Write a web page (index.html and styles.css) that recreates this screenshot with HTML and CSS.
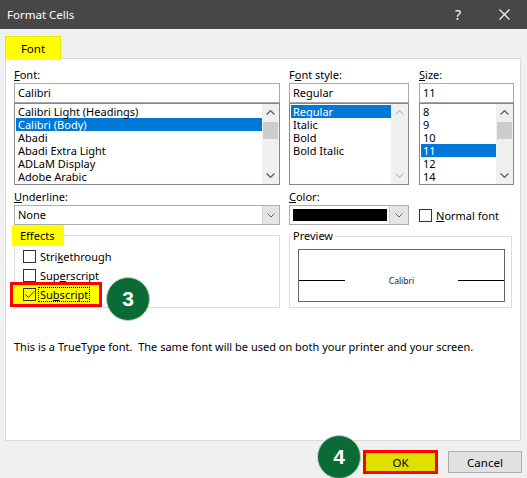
FILE: index.html
```html
<!DOCTYPE html>
<html lang="en">
<head>
    <meta charset="UTF-8">
    <title>Format Cells</title>
    <link rel="stylesheet" href="styles.css">
</head>
<body>
    <div class="dialog">
        <div class="titlebar">
            <span class="title">Format Cells</span>
            <span class="tb-btn">?</span>
            <span class="tb-btn">
                <svg width="11" height="11" viewBox="0 0 11 11"><path d="M0.5 0.5 L10.5 10.5 M10.5 0.5 L0.5 10.5" stroke="#fff" stroke-width="1.1"/></svg>
            </span>
        </div>

        <div class="tabs">
            <div class="tab">Font</div>
        </div>

        <div class="panel">
            <div class="row">
                <div class="col col-font">
                    <div class="label"><u>F</u>ont:</div>
                    <div class="input">Calibri</div>
                    <div class="list">
                        <ul class="items">
                            <li>Calibri Light (Headings)</li>
                            <li class="sel">Calibri (Body)</li>
                            <li>Abadi</li>
                            <li>Abadi Extra Light</li>
                            <li>ADLaM Display</li>
                            <li>Adobe Arabic</li>
                        </ul>
                        <div class="scroll">
                            <span class="arrow"><svg width="9" height="5" viewBox="0 0 9 5"><path d="M0.5 4.5 L4.5 0.7 L8.5 4.5" fill="none" stroke="#606060" stroke-width="1.3"/></svg></span>
                            <span class="track"><span class="thumb"></span></span>
                            <span class="arrow"><svg width="9" height="5" viewBox="0 0 9 5"><path d="M0.5 0.5 L4.5 4.3 L8.5 0.5" fill="none" stroke="#606060" stroke-width="1.3"/></svg></span>
                        </div>
                    </div>
                </div>

                <div class="col col-style">
                    <div class="label">F<u>o</u>nt style:</div>
                    <div class="input">Regular</div>
                    <div class="list">
                        <ul class="items">
                            <li class="sel">Regular</li>
                            <li>Italic</li>
                            <li>Bold</li>
                            <li>Bold Italic</li>
                        </ul>
                        <div class="scroll disabled">
                            <span class="arrow"><svg width="9" height="5" viewBox="0 0 9 5"><path d="M0.5 4.5 L4.5 0.7 L8.5 4.5" fill="none" stroke="#c2c2c2" stroke-width="1.3"/></svg></span>
                            <span class="track"></span>
                            <span class="arrow"><svg width="9" height="5" viewBox="0 0 9 5"><path d="M0.5 0.5 L4.5 4.3 L8.5 0.5" fill="none" stroke="#c2c2c2" stroke-width="1.3"/></svg></span>
                        </div>
                    </div>
                </div>

                <div class="col col-size">
                    <div class="label"><u>S</u>ize:</div>
                    <div class="input">11</div>
                    <div class="list">
                        <ul class="items">
                            <li>8</li>
                            <li>9</li>
                            <li>10</li>
                            <li class="sel">11</li>
                            <li>12</li>
                            <li>14</li>
                        </ul>
                        <div class="scroll">
                            <span class="arrow"><svg width="9" height="5" viewBox="0 0 9 5"><path d="M0.5 4.5 L4.5 0.7 L8.5 4.5" fill="none" stroke="#606060" stroke-width="1.3"/></svg></span>
                            <span class="track"><span class="thumb"></span></span>
                            <span class="arrow"><svg width="9" height="5" viewBox="0 0 9 5"><path d="M0.5 0.5 L4.5 4.3 L8.5 0.5" fill="none" stroke="#606060" stroke-width="1.3"/></svg></span>
                        </div>
                    </div>
                </div>
            </div>

            <div class="row row-2">
                <div class="col col-font">
                    <div class="label"><u>U</u>nderline:</div>
                    <div class="combo">
                        <span class="combo-value">None</span>
                        <span class="combo-btn"><svg width="8" height="5" viewBox="0 0 8 5"><path d="M0.5 0.5 L4 4 L7.5 0.5" fill="none" stroke="#606060" stroke-width="1"/></svg></span>
                    </div>
                </div>
                <div class="col col-color">
                    <div class="label"><u>C</u>olor:</div>
                    <div class="color-row">
                        <div class="combo color-combo">
                            <span class="swatch"></span>
                            <span class="combo-btn"><svg width="8" height="5" viewBox="0 0 8 5"><path d="M0.5 0.5 L4 4 L7.5 0.5" fill="none" stroke="#606060" stroke-width="1"/></svg></span>
                        </div>
                        <label class="check normal-font">
                            <span class="box"></span>
                            <span><u>N</u>ormal font</span>
                        </label>
                    </div>
                </div>
            </div>

            <div class="row row-3">
                <fieldset class="group effects">
                    <legend class="hl">Effects</legend>
                    <label class="check">
                        <span class="box"></span>
                        <span>Stri<u>k</u>ethrough</span>
                    </label>
                    <label class="check">
                        <span class="box"></span>
                        <span>Sup<u>e</u>rscript</span>
                    </label>
                    <label class="check marked">
                        <span class="box checked">
                            <svg width="11" height="11" viewBox="0 0 11 11"><path d="M1.5 5.5 L4.5 8.5 L10 2.5" fill="none" stroke="#333" stroke-width="1"/></svg>
                        </span>
                        <span class="focus">Su<u>b</u>script</span>
                        <span class="step step-3">3</span>
                    </label>
                </fieldset>

                <fieldset class="group preview">
                    <legend>Preview</legend>
                    <div class="preview-box">
                        <span class="baseline"></span>
                        <span class="sample">Calibri</span>
                        <span class="baseline"></span>
                    </div>
                </fieldset>
            </div>

            <p class="info">This is a TrueType font.&nbsp; The same font will be used on both your printer and your screen.</p>
        </div>

        <div class="buttons">
            <button class="btn ok">OK<span class="step step-4">4</span></button>
            <button class="btn">Cancel</button>
        </div>
    </div>
</body>
</html>
```

FILE: styles.css
```css
* {
    box-sizing: border-box;
}
body {
    margin: 0;
    background: #f0f0f0;
    font-family: "Noto Sans", "Open Sans", sans-serif;
    font-size: 11px;
    color: #000;
}
.dialog {
    width: 527px;
    height: 478px;
    overflow: hidden;
}
.titlebar {
    height: 29px;
    background-color: #474747;
    color: #fff;
    display: flex;
    align-items: center;
    padding-left: 7px;
    font-size: 11.5px;
}
.title {
    flex: 1;
}
.tb-btn {
    width: 46px;
    height: 29px;
    display: flex;
    justify-content: center;
    align-items: center;
    font-size: 14px;
}
.tabs {
    height: 29px;
    padding: 7px 0 0 5px;
}
.tab {
    position: relative;
    z-index: 1;
    width: 56px;
    height: 24px;
    line-height: 23px;
    text-align: center;
    font-size: 11.5px;
    background-color: #ffff00;
    border: 1px solid #e8e800;
    border-bottom: none;
}
.panel {
    margin-left: 5px;
    width: 516px;
    height: 383px;
    background-color: #fff;
    border: 1px solid #d9d9d9;
    padding: 8px 6px 0 8px;
}
.row {
    display: flex;
    align-items: flex-start;
}
.row-2 {
    margin-top: 4px;
}
.col-font {
    width: 266px;
}
.col-style {
    width: 120px;
    margin-left: 9px;
}
.col-size {
    width: 95px;
    margin-left: 10px;
}
.col-color {
    margin-left: 9px;
}
.label {
    height: 16px;
    line-height: 16px;
}
.input {
    height: 20px;
    line-height: 18px;
    padding: 0 3px;
    border: 1px solid #a9a9a9;
}
.list {
    height: 82px;
    border: 1px solid #828790;
    display: flex;
}
.items {
    flex: 1;
    list-style: none;
    margin: 0;
    padding: 1px 0 0 1px;
}
.items li {
    height: 13px;
    line-height: 13px;
    padding-left: 2px;
    white-space: nowrap;
}
.items li.sel {
    background-color: #0078d7;
    color: #fff;
}
.scroll {
    width: 17px;
    display: flex;
    flex-direction: column;
    background-color: #f0f0f0;
}
.arrow {
    height: 17px;
    display: flex;
    justify-content: center;
    align-items: center;
}
.track {
    flex: 1;
    padding-top: 1px;
}
.thumb {
    display: block;
    height: 17px;
    margin: 0 1px;
    background-color: #cdcdcd;
}
.combo {
    height: 20px;
    border: 1px solid #adadad;
    display: flex;
    background-color: #fff;
}
.combo-value {
    flex: 1;
    line-height: 18px;
    padding: 0 3px;
}
.combo-btn {
    width: 17px;
    background-color: #e5e5e5;
    border-left: 1px solid #d0d0d0;
    display: flex;
    justify-content: center;
    align-items: center;
}
.color-row {
    display: flex;
    align-items: center;
}
.color-combo {
    width: 120px;
    padding: 3px 0 3px 3px;
}
.swatch {
    flex: 1;
    background-color: #000;
    margin-right: 2px;
}
.color-combo .combo-btn {
    margin: -3px 0;
    width: 19px;
}
.check {
    display: flex;
    align-items: center;
    height: 19px;
}
.box {
    width: 13px;
    height: 13px;
    border: 1px solid #333;
    background-color: #fff;
    margin-right: 4px;
    flex: none;
}
.normal-font {
    margin-left: 10px;
}
.group {
    margin: 0;
    border: 1px solid #dcdcdc;
    min-width: 0;
}
.effects {
    width: 266px;
    padding: 1px 8px 3px 8px;
}
.effects legend.hl {
    margin-left: -11px;
    padding: 0 10px 0 8px;
    height: 21px;
    line-height: 21px;
    background-color: #ffff00;
}
.check.marked {
    position: relative;
    width: 86px;
    margin-left: -10px;
    padding-left: 10px;
    background-color: #ffff00;
    outline: 3px solid #ff0000;
}
.box.checked {
    background-color: transparent;
    padding: 0;
}
.box.checked svg {
    display: block;
}
.focus {
    border: 1px dotted #000;
    padding: 0 1px;
    line-height: 13px;
    margin-left: -2px;
}
.step {
    position: absolute;
    width: 44px;
    height: 44px;
    border-radius: 50%;
    background-color: #0a6b37;
    border: 1px solid #b9d3c0;
    color: #fff;
    font-family: "Liberation Sans", Arial, sans-serif;
    font-weight: bold;
    font-size: 21px;
    line-height: 42px;
    text-align: center;
}
.step-3 {
    left: 93px;
    top: -8px;
}
.step-4 {
    left: -49px;
    top: -18px;
}
.preview {
    width: 223px;
    margin-left: 9px;
    margin-top: 3px;
    padding: 5px 6px 5px 8px;
}
.preview legend {
    margin-left: -7px;
    padding: 0 2px;
    height: 16px;
    line-height: 16px;
}
.preview-box {
    height: 53px;
    border: 1px solid #646464;
    display: flex;
    align-items: center;
    padding-top: 9px;
}
.baseline {
    width: 46px;
    height: 1px;
    background-color: #000;
}
.sample {
    flex: 1;
    text-align: center;
    font-size: 8.5px;
    color: #222;
}
.info {
    margin: 31px 0 0;
    line-height: 16px;
}
.buttons {
    display: flex;
    justify-content: flex-end;
    align-items: center;
    margin-top: 9px;
    height: 24px;
    padding-right: 5px;
}
.btn {
    font-family: inherit;
    font-size: 11.5px;
    color: #000;
    width: 74px;
    height: 22px;
    padding: 0;
    background-color: #e1e1e1;
    border: 1px solid #adadad;
    margin-left: 10px;
}
.btn.ok {
    position: relative;
    width: 75px;
    height: 24px;
    background-color: #e0e000;
    border: 3px solid #ff0000;
}
```
